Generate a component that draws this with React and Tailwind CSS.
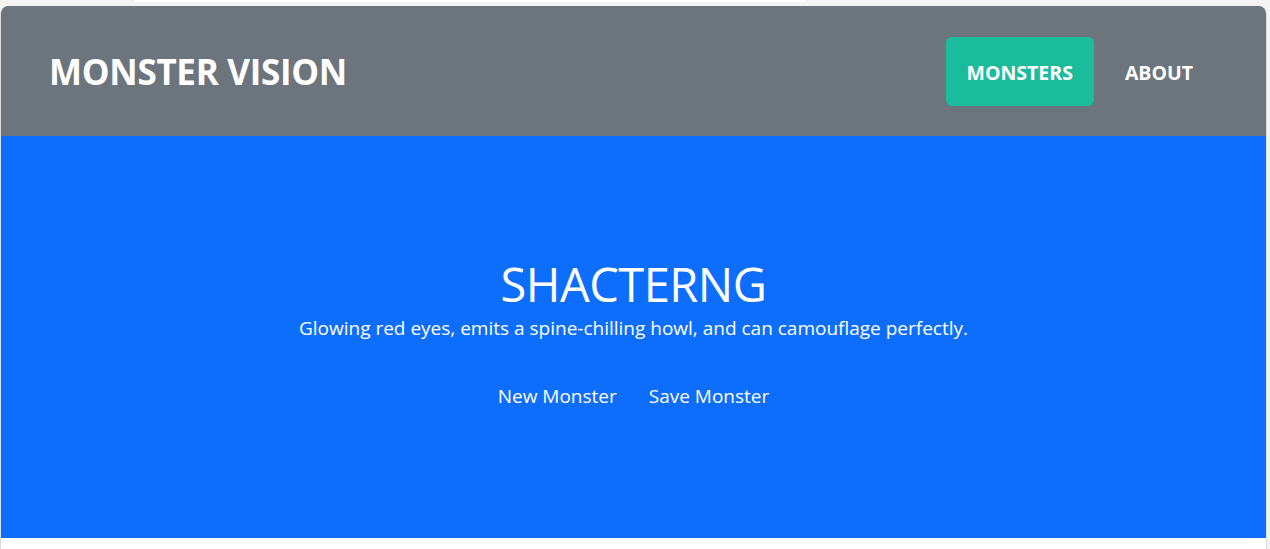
import React from "react";

export default function App() {
  return (
    <div
      className="min-h-screen bg-[#f3f3f3] pr-[3px]"
      style={{ fontFamily: '"Open Sans", "Noto Sans", sans-serif' }}
    >
      <div className="h-[6px] flex items-start">
        <div className="ml-[135px] w-[670px] h-[2px] bg-white" />
      </div>
      <div className="border-x border-[#dcdcdc] rounded-t-lg overflow-hidden bg-white min-h-[543px]">
        <header className="h-[130px] bg-[#6c757d] flex items-center justify-between pl-[48px] pr-[52px]">
          <div className="text-white font-bold text-[35px] tracking-[-0.3px] mt-[2px]">MONSTER VISION</div>
          <nav className="flex items-center gap-[10px]">
            <a className="h-[69px] px-[21px] pt-[3px] flex items-center rounded-md bg-[#1abc9c] text-white font-bold text-[19.5px]">
              MONSTERS
            </a>
            <a className="h-[69px] px-[21px] pt-[3px] flex items-center text-white font-bold text-[19.5px]">
              ABOUT
            </a>
          </nav>
        </header>
        <section className="h-[402px] bg-[#0d6efd] flex flex-col items-center pt-[118px] text-white">
          <h1 className="text-[47px] leading-[60px] font-medium tracking-[-0.5px]">SHACTERNG</h1>
          <p className="text-[19px] leading-[26px] mt-[1px]">
            Glowing red eyes, emits a spine-chilling howl, and can camouflage perfectly.
          </p>
          <div className="flex gap-[32px] mt-[42px] text-[19px] leading-[26px]">
            <button>New Monster</button>
            <button>Save Monster</button>
          </div>
        </section>
      </div>
    </div>
  );
}
